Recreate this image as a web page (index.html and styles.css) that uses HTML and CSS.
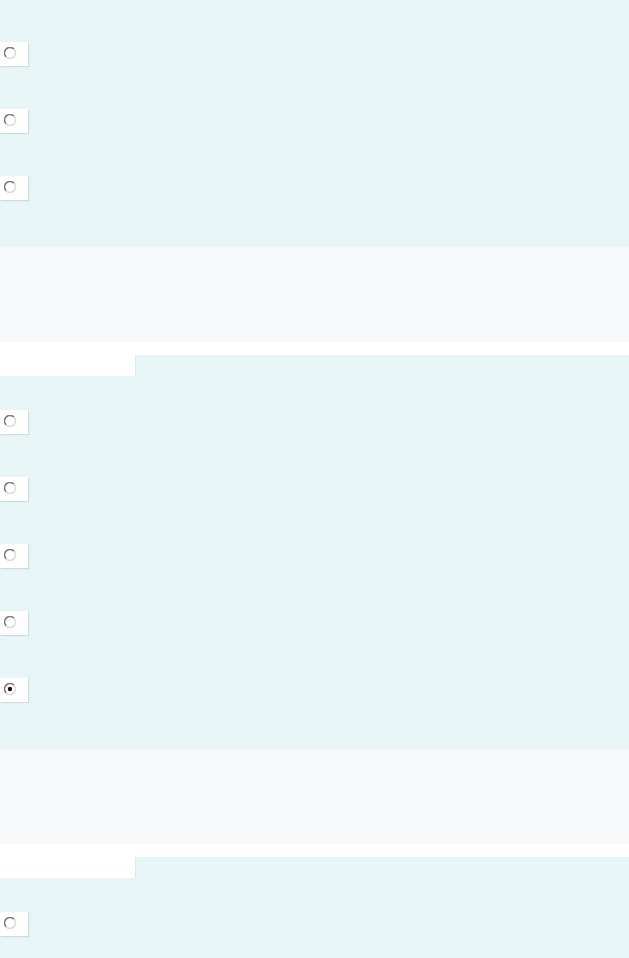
FILE: index.html
```html
<!DOCTYPE html>
<html lang="en">
<head>
    <meta charset="UTF-8">
    <meta name="viewport" content="width=device-width, initial-scale=1.0">
    <title>Options</title>
    <link rel="stylesheet" href="styles.css">
</head>
<body>

    <!-- First group -->
    <section class="group first">
        <ul class="options">
            <li class="option"><span class="choice"><svg class="radio" viewBox="0 0 12 12"><path class="ring-dark" d="M9.9 2.1 A5.5 5.5 0 0 0 2.1 9.9"/><path class="ring-light" d="M2.1 9.9 A5.5 5.5 0 0 0 9.9 2.1"/></svg></span></li>
            <li class="option"><span class="choice"><svg class="radio" viewBox="0 0 12 12"><path class="ring-dark" d="M9.9 2.1 A5.5 5.5 0 0 0 2.1 9.9"/><path class="ring-light" d="M2.1 9.9 A5.5 5.5 0 0 0 9.9 2.1"/></svg></span></li>
            <li class="option"><span class="choice"><svg class="radio" viewBox="0 0 12 12"><path class="ring-dark" d="M9.9 2.1 A5.5 5.5 0 0 0 2.1 9.9"/><path class="ring-light" d="M2.1 9.9 A5.5 5.5 0 0 0 9.9 2.1"/></svg></span></li>
        </ul>
    </section>

    <div class="divider"></div>
    <div class="spacer"></div>

    <!-- Second group -->
    <section class="group">
        <div class="tab-row"><div class="tab"></div></div>
        <ul class="options">
            <li class="option"><span class="choice"><svg class="radio" viewBox="0 0 12 12"><path class="ring-dark" d="M9.9 2.1 A5.5 5.5 0 0 0 2.1 9.9"/><path class="ring-light" d="M2.1 9.9 A5.5 5.5 0 0 0 9.9 2.1"/></svg></span></li>
            <li class="option"><span class="choice"><svg class="radio" viewBox="0 0 12 12"><path class="ring-dark" d="M9.9 2.1 A5.5 5.5 0 0 0 2.1 9.9"/><path class="ring-light" d="M2.1 9.9 A5.5 5.5 0 0 0 9.9 2.1"/></svg></span></li>
            <li class="option"><span class="choice"><svg class="radio" viewBox="0 0 12 12"><path class="ring-dark" d="M9.9 2.1 A5.5 5.5 0 0 0 2.1 9.9"/><path class="ring-light" d="M2.1 9.9 A5.5 5.5 0 0 0 9.9 2.1"/></svg></span></li>
            <li class="option"><span class="choice"><svg class="radio" viewBox="0 0 12 12"><path class="ring-dark" d="M9.9 2.1 A5.5 5.5 0 0 0 2.1 9.9"/><path class="ring-light" d="M2.1 9.9 A5.5 5.5 0 0 0 9.9 2.1"/></svg></span></li>
            <li class="option"><span class="choice"><svg class="radio" viewBox="0 0 12 12"><path class="ring-dark" d="M9.9 2.1 A5.5 5.5 0 0 0 2.1 9.9"/><path class="ring-light" d="M2.1 9.9 A5.5 5.5 0 0 0 9.9 2.1"/><circle class="dot" cx="6" cy="6" r="2.2"/></svg></span></li>
        </ul>
    </section>

    <div class="divider"></div>
    <div class="spacer"></div>

    <!-- Third group -->
    <section class="group">
        <div class="tab-row"><div class="tab"></div></div>
        <ul class="options">
            <li class="option"><span class="choice"><svg class="radio" viewBox="0 0 12 12"><path class="ring-dark" d="M9.9 2.1 A5.5 5.5 0 0 0 2.1 9.9"/><path class="ring-light" d="M2.1 9.9 A5.5 5.5 0 0 0 9.9 2.1"/></svg></span></li>
            <li class="option"><span class="choice"><svg class="radio" viewBox="0 0 12 12"><path class="ring-dark" d="M9.9 2.1 A5.5 5.5 0 0 0 2.1 9.9"/><path class="ring-light" d="M2.1 9.9 A5.5 5.5 0 0 0 9.9 2.1"/></svg></span></li>
        </ul>
    </section>

</body>
</html>
```

FILE: styles.css
```css
* {
    margin: 0;
    padding: 0;
    box-sizing: border-box;
    font-family: "Liberation Sans", Arial, sans-serif;
}

body {
    background-color: #ffffff;
}

.group {
    background-color: #e7f5f7;
    padding-bottom: 47px;
}

.group.first {
    padding-top: 42px;
}

.tab-row {
    height: 21px;
    margin-bottom: 34px;
}

.tab {
    width: 135px;
    height: 21px;
    background-color: #ffffff;
    box-shadow: 1px 0 1px rgba(0, 0, 0, 0.04);
}

.options {
    list-style: none;
    display: flex;
    flex-direction: column;
    gap: 43px;
}

.option {
    display: flex;
}

.choice {
    display: block;
    width: 28px;
    height: 24px;
    padding: 5px 0 0 4px;
    background-color: #ffffff;
    box-shadow: 1px 1px 1px rgba(0, 0, 0, 0.1);
}

.radio {
    display: block;
    width: 12px;
    height: 12px;
}

.ring-dark {
    fill: none;
    stroke: #7a7a7a;
    stroke-width: 1.5;
}

.ring-light {
    fill: none;
    stroke: #dcdcdc;
    stroke-width: 1.5;
}

.dot {
    fill: #111111;
}

.divider {
    height: 95px;
    background-color: #f6f8f9;
}

.spacer {
    height: 13px;
}
```
